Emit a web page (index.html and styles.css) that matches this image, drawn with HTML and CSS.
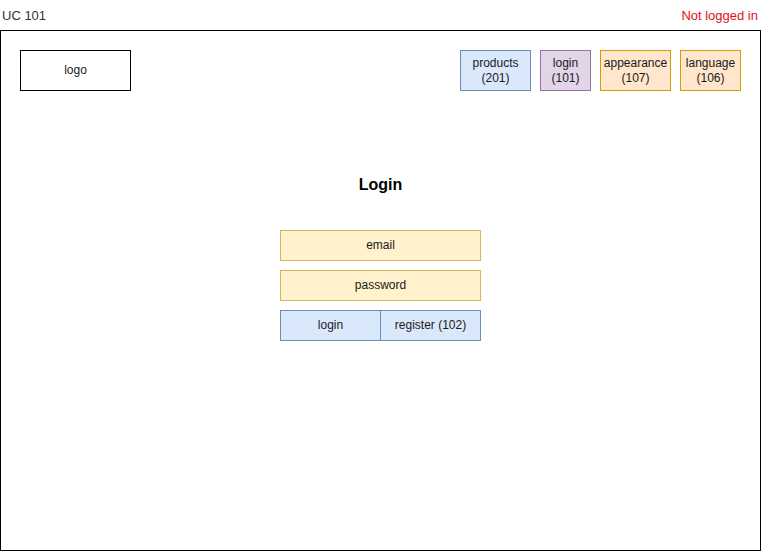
FILE: index.html
```html
<!DOCTYPE html>
<html>
<head>
<meta charset="utf-8">
<link rel="stylesheet" href="styles.css">
</head>
<body>
<div class="topbar">
  <span class="uc">UC 101</span>
  <span class="status">Not logged in</span>
</div>
<div class="frame">
  <div class="nav">
    <div class="logo">logo</div>
    <div class="menu">
      <div class="btn blue w71">products<br>(201)</div>
      <div class="btn purple w51">login<br>(101)</div>
      <div class="btn orange w71">appearance<br>(107)</div>
      <div class="btn orange w61">language<br>(106)</div>
    </div>
  </div>
  <h1 class="title">Login</h1>
  <div class="form">
    <div class="field">email</div>
    <div class="field">password</div>
    <div class="actions">
      <div class="action">login</div>
      <div class="action second">register (102)</div>
    </div>
  </div>
</div>
</body>
</html>
```
FILE: styles.css
```css
* { box-sizing: border-box; }
html, body { margin: 0; padding: 0; background: #fff; }
body {
  font-family: "Liberation Sans", Arial, Helvetica, sans-serif;
  font-size: 12px;
  color: #1a1a1a;
  width: 761px;
  height: 551px;
  overflow: hidden;
}
.topbar {
  height: 30px;
  display: flex;
  justify-content: space-between;
  align-items: center;
  padding: 0 3px 0 2px;
  font-size: 13px;
}
.uc { color: #333; }
.status { color: #e01018; }
.frame {
  width: 761px;
  height: 521px;
  border: 1px solid #000;
  padding: 19px 19px 0 19px;
  display: flex;
  flex-direction: column;
}
.nav {
  display: flex;
  justify-content: space-between;
  align-items: flex-start;
}
.logo {
  width: 111px;
  height: 41px;
  border: 1px solid #000;
  display: flex;
  align-items: center;
  justify-content: center;
  padding-bottom: 2px;
}
.menu { display: flex; gap: 9px; }
.btn {
  height: 41px;
  border: 1px solid;
  display: flex;
  align-items: center;
  justify-content: center;
  text-align: center;
  line-height: 15px;
}
.w71 { width: 71px; }
.w51 { width: 51px; }
.w61 { width: 61px; }
.blue { background: #dae8fc; border-color: #6c8ebf; }
.purple { background: #e1d5e7; border-color: #9673a6; }
.orange { background: #ffe6cc; border-color: #d79b00; }
.title {
  margin: 84px 0 0 0;
  font-size: 16px;
  line-height: 20px;
  font-weight: bold;
  text-align: center;
  color: #000;
}
.form {
  margin-top: 35px;
  display: flex;
  flex-direction: column;
  align-items: center;
  gap: 9px;
}
.field {
  width: 201px;
  height: 31px;
  background: #fff2cc;
  border: 1px solid #d6b656;
  display: flex;
  align-items: center;
  justify-content: center;
  padding-bottom: 2px;
}
.actions { display: flex; width: 201px; }
.action {
  width: 101px;
  height: 31px;
  background: #dae8fc;
  border: 1px solid #6c8ebf;
  display: flex;
  align-items: center;
  justify-content: center;
  padding-bottom: 2px;
}
.action.second { margin-left: -1px; }
```
